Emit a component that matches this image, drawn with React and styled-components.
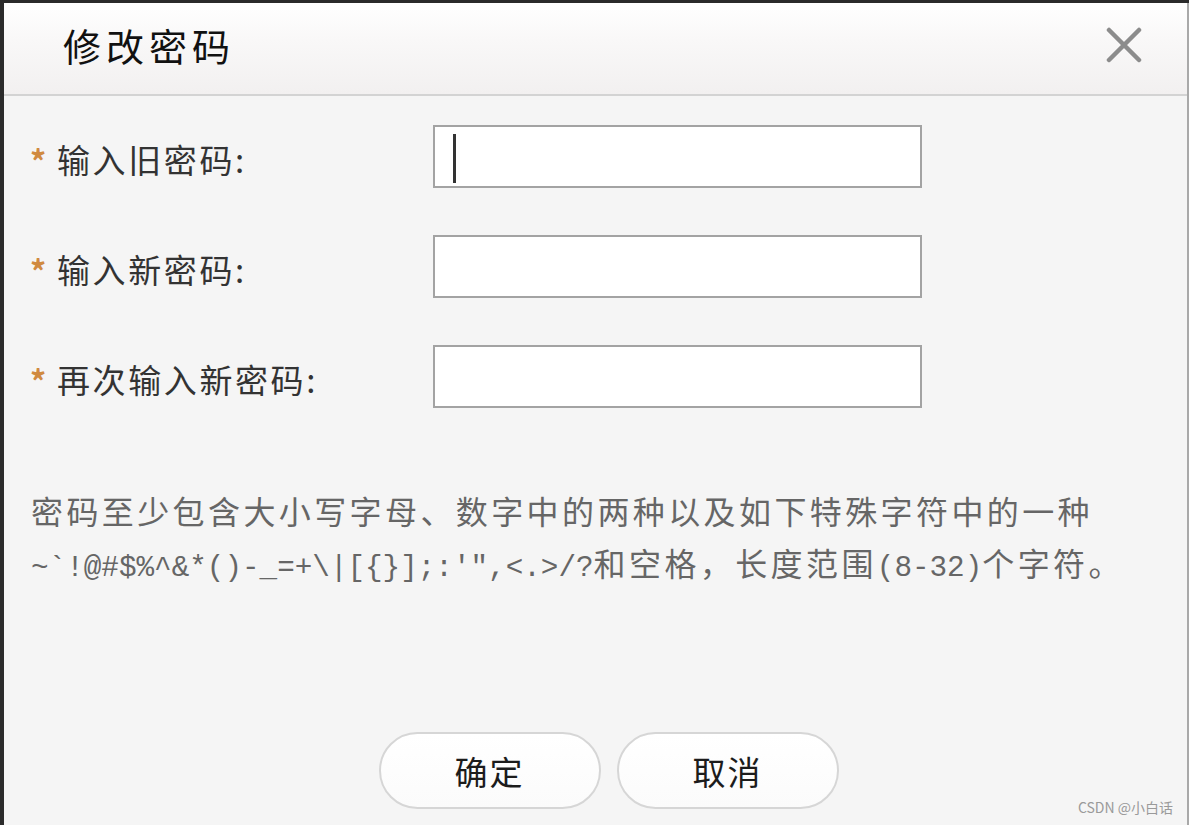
import React from "react";
import styled, { createGlobalStyle } from "styled-components";

const GlobalStyle = createGlobalStyle`
  html, body {
    margin: 0;
    padding: 0;
    background: #2b2b2b;
  }
  body {
    font-family: "Noto Sans CJK SC", "Noto Sans", sans-serif;
  }
`;

const Screen = styled.div`
  width: 1189px;
  height: 825px;
  padding: 3px 0 0 4px;
  box-sizing: border-box;
  overflow: hidden;
`;

const Dialog = styled.div`
  position: relative;
  height: 822px;
  background: #f5f5f5;
  border-right: 2px solid #a9a9a9;
  display: flex;
  flex-direction: column;
`;

const Header = styled.div`
  height: 93px;
  display: flex;
  align-items: center;
  justify-content: space-between;
  padding: 0 45px 8px 59px;
  box-sizing: border-box;
  background: linear-gradient(#ffffff 0%, #f9f8f8 40%, #f2f0f0 100%);
  border-bottom: 2px solid #d3d3d3;
`;

const Title = styled.h1`
  margin: 0;
  font-size: 38px;
  font-weight: 400;
  letter-spacing: 5px;
  color: #111;
`;

const CloseButton = styled.button`
  border: 0;
  padding: 0;
  background: none;
  width: 36px;
  height: 36px;
  display: flex;
  align-items: center;
  justify-content: center;
  cursor: pointer;
`;

const Body = styled.div`
  padding: 29px 0 0 26px;
  display: flex;
  flex-direction: column;
`;

const Form = styled.div`
  display: flex;
  flex-direction: column;
  gap: 47px;
`;

const Row = styled.div`
  display: flex;
  align-items: center;
  height: 63px;
`;

const Label = styled.label`
  width: 403px;
  display: flex;
  align-items: center;
  font-size: 33px;
  letter-spacing: 2.6px;
  color: #333;
  padding-top: 4px;
`;

const Star = styled.span`
  color: #d08a40;
  font-size: 32px;
  width: 27px;
  margin-top: 2px;
  font-weight: 700;
`;

const Field = styled.div`
  position: relative;
  width: 489px;
  height: 63px;
  box-sizing: border-box;
  border: 2px solid #a3a3a3;
  background: #fff;
`;

const Input = styled.input`
  width: 100%;
  height: 100%;
  box-sizing: border-box;
  border: 0;
  outline: none;
  background: transparent;
  font-size: 30px;
  padding: 0 18px;
`;

const Caret = styled.span`
  position: absolute;
  left: 18px;
  top: 7px;
  width: 3px;
  height: 49px;
  background: #333;
`;

const Hint = styled.p`
  margin: 76px 0 0 1px;
  font-size: 32px;
  line-height: 52px;
  letter-spacing: 3.4px;
  color: #666;
`;

const Mono = styled.span`
  font-family: "Liberation Mono", "DejaVu Sans Mono", monospace;
  font-size: 29.3px;
  letter-spacing: 0;
`;

const Actions = styled.div`
  margin-top: 137px;
  display: flex;
  justify-content: center;
  gap: 16px;
`;

const PillButton = styled.button`
  width: 222px;
  height: 77px;
  border-radius: 39px;
  border: 2px solid #d6d6d6;
  background: linear-gradient(#ffffff, #fbfbfb);
  font-family: "Noto Sans CJK SC", sans-serif;
  font-size: 33px;
  letter-spacing: 2px;
  color: #1c1c1c;
  cursor: pointer;
`;

const Watermark = styled.span`
  position: absolute;
  right: 14px;
  bottom: 8px;
  font-family: "Noto Sans CJK SC", sans-serif;
  font-size: 14px;
  color: #9a9a9a;
`;

const fields = [
  { label: "输入旧密码:", focused: true },
  { label: "输入新密码:" },
  { label: "再次输入新密码:" },
];

export default function App() {
  return (
    <>
      <GlobalStyle />
      <Screen>
        <Dialog>
          <Header>
            <Title>修改密码</Title>
            <CloseButton aria-label="关闭">
              <svg width="36" height="36" viewBox="0 0 36 36">
                <path
                  d="M3 3 L33 33 M33 3 L3 33"
                  stroke="#8c8c8c"
                  strokeWidth="4.5"
                  strokeLinecap="round"
                />
              </svg>
            </CloseButton>
          </Header>
          <Body>
            <Form>
              {fields.map((f) => (
                <Row key={f.label}>
                  <Label>
                    <Star>*</Star>
                    {f.label}
                  </Label>
                  <Field>
                    <Input type="password" />
                    {f.focused && <Caret />}
                  </Field>
                </Row>
              ))}
            </Form>
            <Hint>
              密码至少包含大小写字母、数字中的两种以及如下特殊字符中的一种
              <br />
              <Mono>{"~`!@#$%^&*()-_=+\\|[{}];:'\",<.>/?"}</Mono>和空格，长度范围
              <Mono>(8-32)</Mono>个字符。
            </Hint>
            <Actions>
              <PillButton>确定</PillButton>
              <PillButton>取消</PillButton>
            </Actions>
          </Body>
          <Watermark>CSDN @小白话</Watermark>
        </Dialog>
      </Screen>
    </>
  );
}
